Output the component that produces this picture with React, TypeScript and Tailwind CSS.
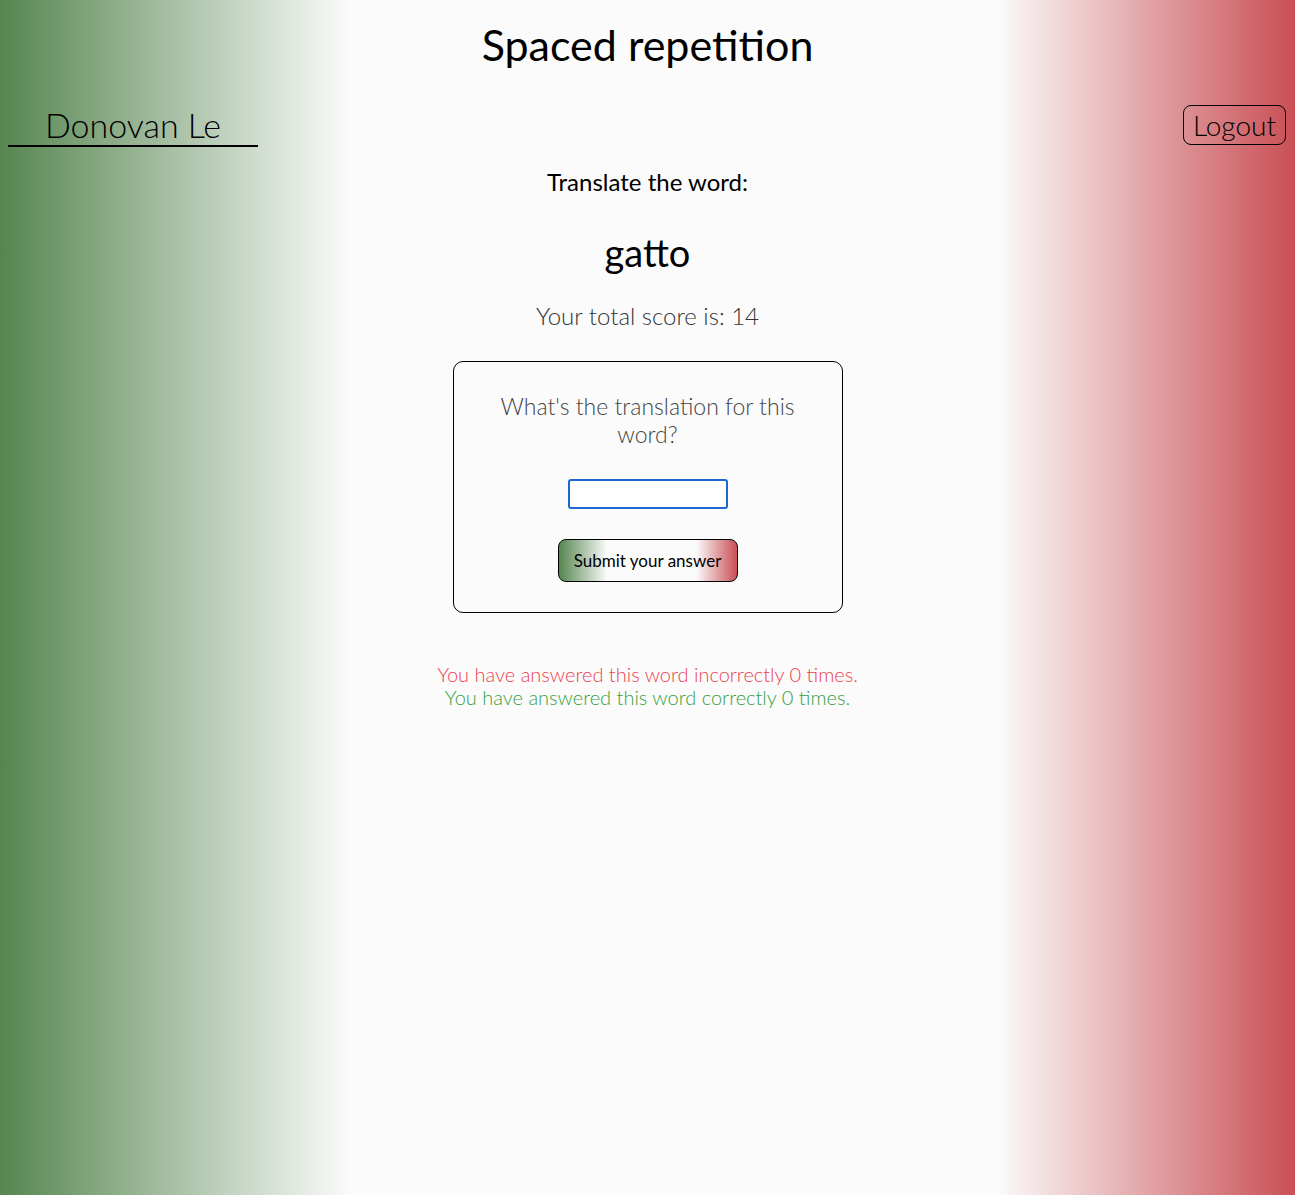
import { useEffect, useRef } from "react";

export default function App() {
  const inputRef = useRef<HTMLInputElement>(null);

  useEffect(() => {
    inputRef.current?.focus();
  }, []);

  return (
    <div
      className="min-h-[1195px] w-full bg-[linear-gradient(to_right,#568650_0%,#fbfbfb_27%,#fbfbfb_77%,#c94f55_100%)] font-['Lato',sans-serif] text-black"
    >
      {/* Header */}
      <header className="flex flex-col">
        <h1 className="pt-[13px] text-center text-[43px] font-normal leading-[64px] text-black">
          Spaced repetition
        </h1>
        <div className="mt-[28px] flex items-start justify-between px-2">
          <div className="w-[250px] border-b-2 border-black text-center text-[34px] font-light leading-[40px]">
            Donovan Le
          </div>
          <button className="mr-[1px] rounded-lg border border-black px-[9px] text-[28px] font-light leading-[38px]">
            Logout
          </button>
        </div>
      </header>

      {/* Word */}
      <main className="flex flex-col items-center">
        <h2 className="mt-[19px] text-[24px] leading-[32px]">Translate the word:</h2>
        <p className="mt-[32px] text-[38px] leading-[44px]">gatto</p>
        <p className="mt-[26px] text-[24px] font-light leading-[32px] text-[#333]">
          Your total score is: 14
        </p>

        <form
          className="mt-[29px] flex w-[390px] flex-col items-center rounded-[10px] border border-black px-10 pt-[30px] pb-[30px]"
          onSubmit={(e) => e.preventDefault()}
        >
          <label
            htmlFor="guess"
            className="text-center text-[23px] font-light leading-[28px] text-[#444]"
          >
            What's the translation for this word?
          </label>
          <input
            ref={inputRef}
            id="guess"
            type="text"
            className="mt-[31px] h-[30px] w-[160px] rounded-[3px] border-2 border-[#1a66d2] bg-white px-1 outline-none"
          />
          <button
            type="submit"
            className="mt-[30px] h-[43px] w-[180px] rounded-lg border border-black bg-[linear-gradient(to_right,#568650_0%,#fbfbfb_27%,#fbfbfb_77%,#c94f55_100%)] text-[17px] leading-[20px]"
          >
            Submit your answer
          </button>
        </form>

        <div className="mt-[50px] flex flex-col items-center text-[20px] font-light leading-[23px]">
          <p className="text-[#ec3f50]">You have answered this word incorrectly 0 times.</p>
          <p className="text-[#36a03e]">You have answered this word correctly 0 times.</p>
        </div>
      </main>
    </div>
  );
}
